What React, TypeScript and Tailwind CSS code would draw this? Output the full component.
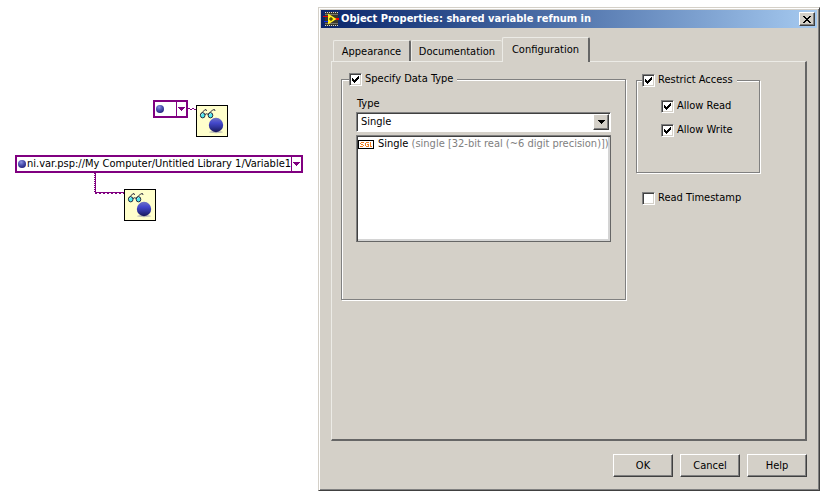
import React, { useState } from 'react'

const cx = (...names: (string | false | undefined)[]) => names.filter(Boolean).join(' ')

const Ball: React.FC<{ className: string }> = ({ className }) => (
  <svg className={className} viewBox="0 0 14 14" aria-hidden="true">
    <defs>
      <radialGradient id="ball" cx="40%" cy="28%" r="75%">
        <stop offset="0" stopColor="#8c94e0" />
        <stop offset="0.5" stopColor="#4c50b0" />
        <stop offset="1" stopColor="#24247c" />
      </radialGradient>
    </defs>
    <circle cx="7" cy="7" r="7" fill="url(#ball)" />
  </svg>
)

const VariableNode: React.FC = () => (
  <svg width="32" height="32" viewBox="0 0 32 32" role="img" aria-label="Read shared variable">
    <defs>
      <linearGradient id="sphere" x1="0" y1="0" x2="0" y2="1">
        <stop offset="0" stopColor="#7074c4" />
        <stop offset="0.35" stopColor="#4448cc" />
        <stop offset="0.65" stopColor="#30349c" />
        <stop offset="1" stopColor="#181858" />
      </linearGradient>
    </defs>
    <rect x="0.5" y="0.5" width="31" height="31" fill="#ffffcc" stroke="#000" />
    <ellipse cx="20" cy="27" rx="7" ry="1.2" fill="#c0c0b8" />
    <circle cx="20" cy="20" r="7.2" fill="url(#sphere)" />
    <g fill="none" stroke="#181830" strokeWidth="0.9">
      <path d="M4.500 9.500L8.500 5L10 4.500L10.500 6M12.500 9L16.500 5L18.500 4.500L19 6M9 9.500Q10.500 8 12.500 9.500" />
      <ellipse cx="6.700" cy="10.300" rx="2.300" ry="2.600" fill="#50e8f0" />
      <ellipse cx="14.500" cy="10.300" rx="2.300" ry="2.600" fill="#50e8f0" />
    </g>
    <path d="M5.500 9.500l1-1M13.500 9.500l1-1" stroke="#fff" />
  </svg>
)

const Arrow: React.FC<{ className?: string }> = ({ className }) => (
  <svg width="7" height="4" viewBox="0 0 7 4" className={className} shapeRendering="crispEdges" aria-hidden="true">
    <path d="M0 0h7v1H0zM1 1h5v1H1zM2 2h3v1H2zM3 3h1v1H3z" fill="currentColor" />
  </svg>
)

const RefnumConstant: React.FC<{ value?: string; className: string }> = ({ value, className }) => (
  <button
    type="button"
    aria-label={value ? undefined : 'Variable'}
    className={cx('flex h-[18px] items-stretch border-2 border-[#800080] bg-white text-left whitespace-nowrap', className)}
  >
    <span className="flex min-w-0 flex-1 items-center gap-px pl-px">
      <Ball className="size-[8px] shrink-0" />
      {value}
    </span>
    <span className="flex w-[10px] shrink-0 items-center justify-center border-l border-[#800080] text-[#800080]">
      <Arrow />
    </span>
  </button>
)

const Diagram: React.FC = () => (
  <section aria-label="Block diagram" className="relative w-[318px] shrink-0">
    <svg className="absolute top-0 left-0" width="318" height="240" aria-hidden="true" shapeRendering="crispEdges">
      <g fill="none" stroke="#800080">
        <path d="M188 108.500h2M190 109.500h2M192 108.500h2M194 109.500h2" />
        <path d="M94.500 173V193" strokeDasharray="1 1" />
        <path d="M95.500 173V193" />
        <path d="M95 192.500H124" />
        <path d="M95 193.500H124" strokeDasharray="2 2" />
      </g>
    </svg>
    <RefnumConstant className="absolute top-[100px] left-[153px] w-[35px]" />
    <div className="absolute top-[105px] left-[196px]">
      <VariableNode />
    </div>
    <RefnumConstant
      value="ni.var.psp://My Computer/Untitled Library 1/Variable1"
      className="absolute top-[155px] left-[15px] w-[288px]"
    />
    <div className="absolute top-[189px] left-[124px]">
      <VariableNode />
    </div>
  </section>
)

const AppIcon: React.FC = () => (
  <svg width="16" height="16" viewBox="0 0 16 16" aria-hidden="true">
    <g shapeRendering="crispEdges">
      <rect x="2" y="1" width="13" height="14" fill="#38382c" />
      <path d="M2 1.500H15M2 14.500H15" stroke="#d8d8d0" strokeDasharray="1 1" />
      <path d="M2 3.500H15M2 12.500H15" stroke="#74746c" />
      <path d="M0 5.500h5" stroke="#f00000" />
      <path d="M1 10.500h4" stroke="#1030f0" />
      <path d="M12 8h4" stroke="#f00000" strokeWidth="2" />
    </g>
    <path d="M5 2.500L13.500 8L5 13.500z" fill="#ffee20" />
    <path d="M6 8h4M8 6v4" stroke="#201c00" />
  </svg>
)

interface CheckProps {
  label: string
  initial?: boolean
  className?: string
}

const Check: React.FC<CheckProps> = ({ label, initial = false, className }) => {
  const [checked, setChecked] = useState(initial)
  return (
    <label className={cx('flex items-center gap-[3px]', className)}>
      <span className="grid size-[13px] shrink-0 place-items-center">
        <input
          type="checkbox"
          checked={checked}
          onChange={(e) => setChecked(e.target.checked)}
          className="col-start-1 row-start-1 size-[13px] appearance-none border border-t-[#808080] border-r-white border-b-white border-l-[#808080] bg-white shadow-[inset_1px_1px_0_#404040,inset_-1px_-1px_0_#d4d0c8]"
        />
        {checked && (
          <svg
            className="pointer-events-none col-start-1 row-start-1"
            width="7"
            height="7"
            viewBox="0 0 7 7"
            shapeRendering="crispEdges"
            aria-hidden="true"
          >
            <path d="M0 2h1v3H0zM1 3h1v3H1zM2 4h1v3H2zM3 3h1v3H3zM4 2h1v3H4zM5 1h1v3H5zM6 0h1v3H6z" />
          </svg>
        )}
      </span>
      {label}
    </label>
  )
}

const group = 'border border-[#808080] shadow-[1px_1px_0_#fff,inset_1px_1px_0_#fff]'

const tabs = [
  { name: 'Appearance', width: 'w-[78px]' },
  { name: 'Documentation', width: 'w-[91px]' },
  { name: 'Configuration', width: 'w-[88px]' },
]

const DialogButton: React.FC<{ children: string }> = ({ children }) => (
  <button
    type="button"
    className="h-[23px] w-[60px] border border-t-white border-r-[#404040] border-b-[#404040] border-l-white shadow-[inset_-1px_-1px_0_#808080]"
  >
    {children}
  </button>
)

const PropertiesDialog: React.FC = () => {
  const [active, setActive] = useState('Configuration')
  return (
    <div
      role="dialog"
      aria-labelledby="dialog-title"
      className="mt-[7px] mr-5 flex-1 border border-t-[#d4d0c8] border-r-[#404040] border-b-[#404040] border-l-[#d4d0c8] bg-[#d4d0c8] p-[2px] shadow-[inset_1px_1px_0_#fff,inset_-1px_-1px_0_#808080]"
    >
      <header className="flex h-[18px] items-center gap-[2px] bg-linear-to-r from-[#0a246a] to-[#a6caf0] px-[2px] text-white">
        <AppIcon />
        <h1 id="dialog-title" className="flex-1 font-bold">
          Object Properties: shared variable refnum in
        </h1>
        <button
          type="button"
          aria-label="Close"
          className="flex h-[14px] w-4 items-center justify-center border border-t-white border-r-[#404040] border-b-[#404040] border-l-white bg-[#d4d0c8] text-black shadow-[inset_-1px_-1px_0_#808080]"
        >
          <svg width="8" height="7" viewBox="0 0 8 7" shapeRendering="crispEdges" aria-hidden="true">
            <path d="M0 0h2v1H0zM6 0h2v1H6zM1 1h2v1H1zM5 1h2v1H5zM2 2h4v1H2zM3 3h2v1H3zM2 4h4v1H2zM1 5h2v1H1zM5 5h2v1H5zM0 6h2v1H0zM6 6h2v1H6z" />
          </svg>
        </button>
      </header>

      <div className="px-[10px] pt-[9px] pb-[11px]">
        <div role="tablist" className="flex items-end px-[2px]">
          {tabs.map(({ name, width }) => (
            <button
              key={name}
              type="button"
              role="tab"
              aria-selected={active === name}
              onClick={() => setActive(name)}
              className={cx(
                'rounded-t-[2px] border-t border-l border-[#ecebe6] bg-[#d4d0c8]',
                width,
                active === name ? 'z-10 -mb-px h-[25px] border-r-2 border-r-[#666] pb-px' : 'h-[21px] pt-[2px]',
                name === 'Appearance' && active !== name && 'border-r-2 border-r-[#666]'
              )}
            >
              {name}
            </button>
          ))}
        </div>

        <div
          role="tabpanel"
          className="flex min-h-[380px] items-start gap-[10px] border-t border-r-2 border-b-2 border-l border-t-[#ecebe6] border-r-[#666] border-b-[#666] border-l-[#ecebe6] px-[9px] pt-[10px]"
        >
          <fieldset className={cx(group, 'h-[228px] w-[285px] px-[14px]')}>
            <legend className="-ml-[7px] bg-[#d4d0c8] pr-1">
              <Check label="Specify Data Type" initial />
            </legend>
            <label htmlFor="type" className="mt-[11px] block px-px">
              Type
            </label>
            <div className="mt-px grid h-5 grid-cols-[1fr_20px] items-center">
              <select
                id="type"
                className="col-span-2 col-start-1 row-start-1 h-5 w-full appearance-none border border-t-[#808080] border-r-white border-b-white border-l-[#808080] bg-white px-1 shadow-[inset_1px_1px_0_#404040]"
              >
                <option>Single</option>
              </select>
              <span className="pointer-events-none col-start-2 row-start-1 flex size-4 items-center justify-center justify-self-center border border-t-white border-r-[#404040] border-b-[#404040] border-l-white bg-[#d4d0c8] shadow-[inset_-1px_-1px_0_#808080]">
                <Arrow />
              </span>
            </div>
            <ul
              role="listbox"
              aria-label="Type details"
              className="mt-[3px] h-[107px] border border-t-[#808080] border-r-[#666] border-b-[#666] border-l-[#808080] bg-white p-px shadow-[inset_1px_1px_0_#404040,inset_-2px_-2px_0_#d4d4d4]"
            >
              <li role="option" aria-selected="false" className="flex items-center gap-1 whitespace-nowrap">
                <svg width="16" height="9" viewBox="0 0 16 9" shapeRendering="crispEdges" aria-hidden="true">
                  <rect x="0.5" y="0.5" width="15" height="8" fill="#fff" stroke="#000" />
                  <path
                    d="M3 2h3v1H3zM2 3h1v1H2zM3 4h2v1H3zM5 5h1v1H5zM2 6h3v1H2zM8 2h3v1H8zM7 3h1v3H7zM8 6h3v1H8zM9 4h2v1H9zM10 5h1v1H10zM12 2h1v5H12zM13 6h1v1H13z"
                    fill="#f08020"
                  />
                </svg>
                <span>
                  Single <span className="text-[#808080]">(single [32-bit real (~6 digit precision)])</span>
                </span>
              </li>
            </ul>
          </fieldset>

          <div>
            <fieldset className={cx(group, 'mt-px h-[100px] w-[124px] px-[5px]')}>
              <legend className="bg-[#d4d0c8] pr-1">
                <Check label="Restrict Access" initial />
              </legend>
              <Check label="Allow Read" initial className="mt-[12px] ml-[19px]" />
              <Check label="Allow Write" initial className="mt-[10px] ml-[19px]" />
            </fieldset>
            <Check label="Read Timestamp" className="mt-[18px] ml-[6px]" />
          </div>
        </div>

        <footer className="mt-[13px] flex justify-end gap-[7px]">
          <DialogButton>OK</DialogButton>
          <DialogButton>Cancel</DialogButton>
          <DialogButton>Help</DialogButton>
        </footer>
      </div>
    </div>
  )
}

export default function App() {
  return (
    <main className="flex min-h-screen items-start bg-white font-['DejaVu_Sans_Condensed',sans-serif] text-[11px] leading-[14px] text-black">
      <Diagram />
      <PropertiesDialog />
    </main>
  )
}
